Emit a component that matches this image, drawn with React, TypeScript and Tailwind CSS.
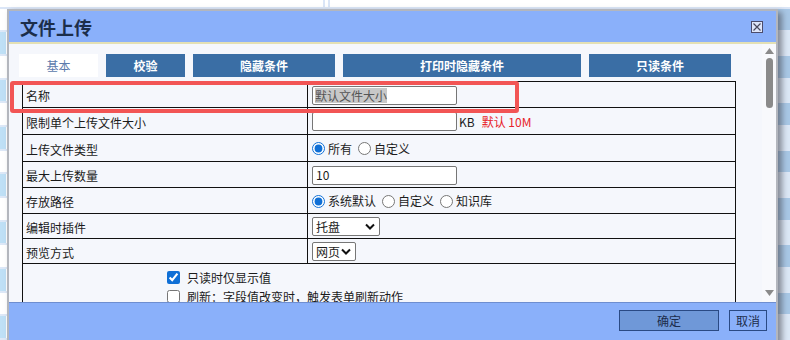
import React from "react";

const font = "font-['Noto_Sans_CJK_SC','Noto_Sans',sans-serif]";

function Radio({ checked, label }: { checked?: boolean; label: string }) {
  return (
    <label className="flex items-center gap-[3px] mr-[6px]">
      <input
        type="radio"
        readOnly
        checked={!!checked}
        className="m-0 w-[13px] h-[13px] accent-[#0f6fd6]"
      />
      <span>{label}</span>
    </label>
  );
}

function FakeSelect({ w, label }: { w: string; label: string }) {
  return (
    <div
      className={`${w} h-[19px] border border-[#767676] rounded-[2px] bg-white flex items-center justify-between pl-[3px] pr-[4px]`}
    >
      <span>{label}</span>
      <svg width="10" height="7" viewBox="0 0 10 7">
        <path d="M1 1.5 L5 5.5 L9 1.5" fill="none" stroke="#111" strokeWidth="2" />
      </svg>
    </div>
  );
}

function Row({ h, label, children }: { h: string; label: string; children?: React.ReactNode }) {
  return (
    <div className={`${h} flex border-b border-[#111]`}>
      <div className="w-[285px] shrink-0 border-r border-[#111] flex items-center pl-[3px] pt-[3px]">
        {label}
      </div>
      <div className="flex-1 flex items-center pl-[4px] pt-[1px]">{children}</div>
    </div>
  );
}

export default function App() {
  const bgRows = Array.from({ length: 14 });
  return (
    <div className={`relative w-[790px] h-[340px] overflow-hidden bg-white text-[12px] text-[#1b1b1b] ${font}`}>
      {/* page behind the dialog */}
      <div className="absolute inset-0 flex flex-col">
        <div className="h-[9px] flex border-b-2 border-[#dbe6f7]">
          <div className="w-[325px] border-r-2 border-[#dbe6f7]" />
          <div className="w-[3px]" />
          <div className="flex-1 border-l-2 border-[#dbe6f7]" />
        </div>
        {bgRows.map((_, i) => (
          <div key={i} className="h-[25px] flex border-b-2 border-[#dde8f7]">
            <div className={`w-[6px] ${i % 2 === 1 ? "bg-[#bfe0f6]" : "bg-white"}`} />
            <div className="flex-1" />
            <div className={`w-[12px] ${i % 2 === 0 ? "bg-[#a9c8e6]" : "bg-[#dce8f6]"}`} />
          </div>
        ))}
      </div>

      {/* dialog window */}
      <div className="absolute left-[7px] top-[9px] w-[771px] h-[340px] border-2 border-[#b3b6bd] flex flex-col shadow-[4px_3px_6px_rgba(60,60,70,0.55)] bg-[#f5f7fc]">
        <div className="h-[33px] shrink-0 bg-[#8ab0fa] border-b-2 border-[#e3e0b4] flex items-center justify-between pl-[11px] pr-[13px]">
          <span className="text-[18px] font-bold text-[#1c2e4a] leading-none pt-[1px]">文件上传</span>
          <div className="w-[12px] h-[12px] border border-[#4c4c6c] bg-[#dfe6fa] flex items-center justify-center">
            <svg width="10" height="10" viewBox="0 0 10 10">
              <path d="M1.5 1.5 L8.5 8.5 M8.5 1.5 L1.5 8.5" stroke="#4a4a5e" strokeWidth="1.2" />
            </svg>
          </div>
        </div>

        <div className="h-[258px] shrink-0 flex overflow-hidden">
          <div className="flex-1 pt-[10px] pl-[10px] overflow-hidden">
            <div className="flex gap-[8px] h-[23px]">
              <div className="w-[79px] bg-white text-[#5b7aac] flex items-center justify-center">基本</div>
              <div className="w-[79px] bg-[#3a6ea5] text-white font-bold flex items-center justify-center">校验</div>
              <div className="w-[142px] bg-[#3a6ea5] text-white font-bold flex items-center justify-center">隐藏条件</div>
              <div className="w-[238px] bg-[#3a6ea5] text-white font-bold flex items-center justify-center">打印时隐藏条件</div>
              <div className="w-[142px] bg-[#3a6ea5] text-white font-bold flex items-center justify-center">只读条件</div>
            </div>

            <div className="mt-[4px] ml-[3px] w-[714px] border-t border-l border-r border-[#111]">
              <Row h="h-[26px]" label="名称">
                <div className="w-[145px] h-[19px] border border-[#767676] rounded-[2px] bg-white flex items-center pl-[2px]">
                  <span className="bg-[#c8c8c8] text-[#555] leading-[15px]">默认文件大小</span>
                </div>
              </Row>
              <Row h="h-[27px]" label="限制单个上传文件大小">
                <div className="w-[145px] h-[19px] border border-[#767676] rounded-[2px] bg-white" />
                <span className="ml-[2px]">KB</span>
                <span className="ml-[7px] text-[#e8232a]">默认 10M</span>
              </Row>
              <Row h="h-[27px]" label="上传文件类型">
                <Radio checked label="所有" />
                <Radio label="自定义" />
              </Row>
              <Row h="h-[26px]" label="最大上传数量">
                <div className="w-[145px] h-[19px] border border-[#767676] rounded-[2px] bg-white flex items-center pl-[3px]">
                  10
                </div>
              </Row>
              <Row h="h-[26px]" label="存放路径">
                <Radio checked label="系统默认" />
                <Radio label="自定义" />
                <Radio label="知识库" />
              </Row>
              <Row h="h-[25px]" label="编辑时插件">
                <FakeSelect w="w-[68px]" label="托盘" />
              </Row>
              <Row h="h-[25px]" label="预览方式">
                <FakeSelect w="w-[44px]" label="网页" />
              </Row>
              <div className="h-[60px] border-b border-[#111] pl-[144px] pt-[5px] flex flex-col gap-[2px]">
                <label className="flex items-center gap-[7px] h-[17px]">
                  <input type="checkbox" readOnly checked className="m-0 w-[13px] h-[13px] accent-[#0f6fd6]" />
                  <span>只读时仅显示值</span>
                </label>
                <label className="flex items-center gap-[7px] h-[17px]">
                  <input type="checkbox" readOnly checked={false} className="m-0 w-[13px] h-[13px]" />
                  <span>刷新：字段值改变时，触发表单刷新动作</span>
                </label>
              </div>
            </div>
          </div>

          {/* scrollbar */}
          <div className="w-[14px] shrink-0 bg-[#f8f9fc] flex flex-col items-center pt-[4px] pb-[6px]">
            <svg width="9" height="6" viewBox="0 0 9 6">
              <path d="M0 6 L4.5 0 L9 6 Z" fill="#8a8a8a" />
            </svg>
            <div className="mt-[4px] w-[7px] h-[50px] rounded-full bg-[#8a8a8a]" />
            <div className="flex-1" />
            <svg width="9" height="6" viewBox="0 0 9 6">
              <path d="M0 0 L9 0 L4.5 6 Z" fill="#8a8a8a" />
            </svg>
          </div>
        </div>

        <div className="flex-1 bg-[#8ab0fa] border-t border-[#6e8ed0] flex justify-end items-start pt-[7px] pr-[9px] gap-[10px]">
          <div className="w-[100px] h-[21px] bg-[#6f98d8] border border-[#2a4a84] text-[#1c2c4c] flex items-center justify-center">
            确定
          </div>
          <div className="w-[38px] h-[21px] bg-[#8ab0fa] border border-[#2a4a84] text-[#1c2c4c] flex items-center justify-center">
            取消
          </div>
        </div>
      </div>

      {/* red highlight */}
      <div className="absolute left-[10px] top-[81px] w-[509px] h-[32px] border-[4px] border-[#f25555] rounded-[3px]" />
    </div>
  );
}
